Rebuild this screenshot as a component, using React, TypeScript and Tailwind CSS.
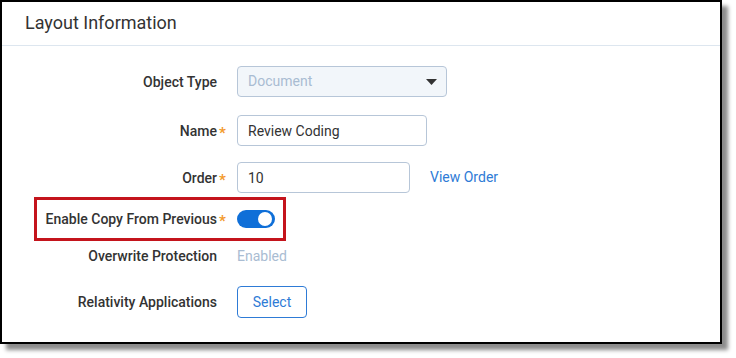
import type { ReactNode } from "react";

const FONT = { fontFamily: "Roboto, 'Liberation Sans', sans-serif" };

function Row({ label, required, className = "", children }: { label: string; required?: boolean; className?: string; children: ReactNode }) {
  return (
    <div className={`flex items-center ${className}`}>
      <div className="w-[215px] shrink-0 text-right">
        <span className="relative text-[14px] font-medium text-[#333]">
          {label}
          {required && <span className="absolute left-full top-[-1px] ml-[2px] text-[15px] font-bold text-[#f39a2c]">*</span>}
        </span>
      </div>
      <div className="ml-[20px] flex items-center">{children}</div>
    </div>
  );
}

export default function App() {
  const inputCls = "h-[31px] rounded-[4px] border border-[#b7c6d8] bg-white px-[10px] text-[14px] text-[#333] outline-none";

  return (
    <div className="h-[358px] w-[736px] bg-white" style={FONT}>
      <div className="relative h-[344px] w-[722px] border-2 border-black bg-white shadow-[6px_6px_4px_rgba(0,0,0,0.45)]">
        {/* header */}
        <div className="h-[44px] border-b border-[#dde6ef] pl-[23px] pt-[9px] text-[18px] leading-[24px] text-[#333]">
          Layout Information
        </div>

        <div className="flex flex-col">
          <Row label="Object Type" className="mt-[20px] h-[31px]">
            <div className="flex h-[31px] w-[210px] items-center justify-between rounded-[4px] border border-[#b7c6d8] bg-[#f2f6fa] pl-[10px] pr-[9px]">
              <span className="text-[14px] text-[#a9bcd2]">Document</span>
              <svg width="11" height="6" viewBox="0 0 11 6"><path d="M0 0h11L5.5 6Z" fill="#333" /></svg>
            </div>
          </Row>

          <Row label="Name" required className="mt-[18px] h-[31px]">
            <input className={`${inputCls} w-[190px]`} defaultValue="Review Coding" />
          </Row>

          <Row label="Order" required className="mt-[16px] h-[31px]">
            <input className={`${inputCls} w-[173px]`} defaultValue="10" />
            <a className="ml-[20px] text-[14px] text-[#2e7bd6]">View Order</a>
          </Row>

          <div className="relative mt-[4px]">
            <Row label="Enable Copy From Previous" required className="h-[44px]">
              <span className="flex h-[18px] w-[38px] items-center justify-end rounded-full bg-[#0f6fd8] pr-[3px]">
                <span className="h-[14px] w-[14px] rounded-full bg-white" />
              </span>
            </Row>
            {/* annotation box */}
            <div className="pointer-events-none absolute left-[32px] top-0 h-[44px] w-[252px] border-[3px] border-[#c4141c]" />
          </div>

          <Row label="Overwrite Protection" className="h-[30px]">
            <span className="text-[14px] text-[#a9bcd2]">Enabled</span>
          </Row>

          <Row label="Relativity Applications" className="mt-[15px] h-[32px]">
            <button className="h-[32px] w-[70px] rounded-[4px] border border-[#2e7bd6] bg-white text-[14px] text-[#2e7bd6]">Select</button>
          </Row>
        </div>
      </div>
    </div>
  );
}
